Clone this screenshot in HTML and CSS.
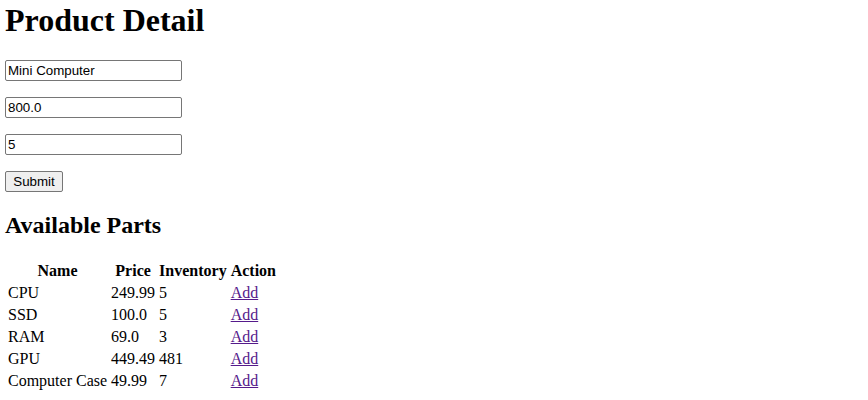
FILE: index.html
```html
<!DOCTYPE html>
<html>
<head>
    <title>Product Detail</title>
    <link rel="stylesheet" href="styles.css">
</head>
<body>
    <h1>Product Detail</h1>
    <form class="product-form">
        <p><input type="text" class="field" value="Mini Computer"></p>
        <p><input type="text" class="field" value="800.0"></p>
        <p><input type="text" class="field" value="5"></p>
        <p><button type="button" class="submit-btn">Submit</button></p>
    </form>

    <h2>Available Parts</h2>
    <table class="parts">
        <tr>
            <th>Name</th>
            <th>Price</th>
            <th>Inventory</th>
            <th>Action</th>
        </tr>
        <tr><td>CPU</td><td>249.99</td><td>5</td><td><a href="#">Add</a></td></tr>
        <tr><td>SSD</td><td>100.0</td><td>5</td><td><a href="#">Add</a></td></tr>
        <tr><td>RAM</td><td>69.0</td><td>3</td><td><a href="#">Add</a></td></tr>
        <tr><td>GPU</td><td>449.49</td><td>481</td><td><a href="#">Add</a></td></tr>
        <tr><td>Computer Case</td><td>49.99</td><td>7</td><td><a href="#">Add</a></td></tr>
    </table>
</body>
</html>
```

FILE: styles.css
```css
body {
    font-family: "Liberation Serif", "Times New Roman", serif;
    font-size: 16px;
    margin: 0 5px;
    color: #000;
    background: #fff;
}
h1 {
    font-size: 32px;
    margin: 2px 0 21px;
}
h2 {
    font-size: 24px;
    margin: 20px 0;
}
.product-form p {
    margin: 16px 0;
    line-height: 0;
}
.field {
    box-sizing: border-box;
    width: 177px;
    height: 21px;
    padding: 1px 2px;
    border: 1px solid #767676;
    border-radius: 2px;
    font-family: "Liberation Sans", Arial, sans-serif;
    font-size: 13.333px;
    color: #000;
    background: #fff;
}
.submit-btn {
    box-sizing: border-box;
    height: 21px;
    width: 58px;
    padding: 1px 6px;
    border: 1px solid #767676;
    border-radius: 2px;
    background: #efefef;
    font-family: "Liberation Sans", Arial, sans-serif;
    font-size: 13.333px;
    color: #000;
}
.parts {
    border-spacing: 2px;
}
.parts th,
.parts td {
    padding: 1px;
}
.parts td {
    text-align: left;
}
.parts a {
    color: #551a8b;
    text-decoration: underline;
}
```
